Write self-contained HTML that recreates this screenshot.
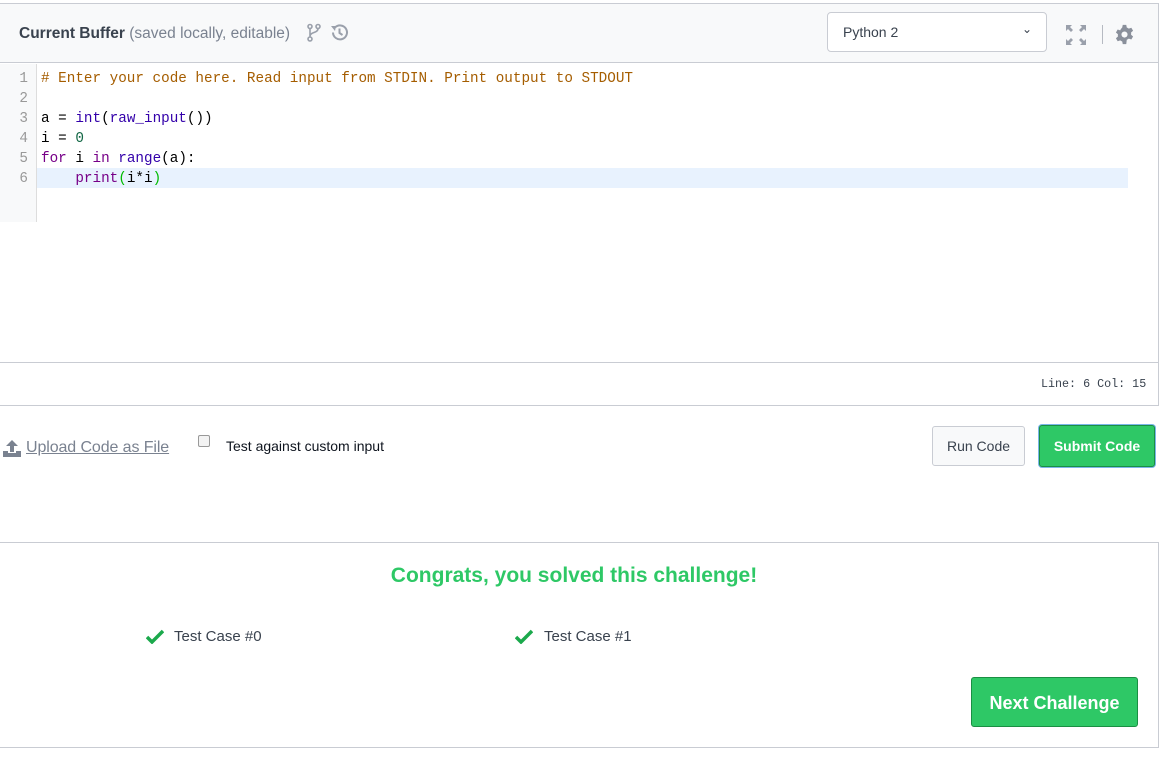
<!DOCTYPE html>
<html><head><style>
*{box-sizing:border-box;margin:0;padding:0}
body{width:1164px;height:760px;background:#fff;font-family:"Liberation Sans",sans-serif;position:relative;overflow:hidden}
.abs{position:absolute}
.box{left:0;top:3px;width:1159px;height:403px;border:1px solid #c9ccd3;border-left:none}
.hdr{left:0;top:4px;width:1158px;height:59px;background:#f8f9fa;border-bottom:1px solid #c9ccd3}
.code{font-family:"Liberation Mono",monospace;font-size:14.3px;line-height:20px;white-space:pre}
.gut{left:0;top:64px;width:37px;height:158px;background:#f8f9fa;border-right:1px solid #ddd}
.btn{border-radius:3px;font-size:14px;font-weight:bold;text-align:center}
</style></head><body>
<div class="abs box"></div>
<div class="abs hdr"></div>
<div class="abs" style="left:19px;top:25px;font-size:15.5px;color:#39424e"><b style="font-weight:bold">Current Buffer</b> <span style="color:#7a8290">(saved locally, editable)</span></div>
<svg class="abs" style="left:306px;top:23px" width="16" height="20" viewBox="0 0 16 20"><g fill="none" stroke="#9aa0ab" stroke-width="1.6"><circle cx="4" cy="3.5" r="2"/><circle cx="12" cy="3.5" r="2"/><circle cx="4" cy="16" r="2"/><path d="M4 5.5V14M12 5.5c0 5-8 3-8 8"/></g></svg>
<svg class="abs" style="left:330px;top:23px" width="19" height="19" viewBox="0 0 19 19"><g fill="none" stroke="#9aa0ab" stroke-width="2"><path d="M3 9.5a7 7 0 1 0 2-5"/><path d="M9.5 5.5v4.5l3 2"/></g><path d="M1 3l5 0-1 5z" fill="#9aa0ab"/></svg>
<div class="abs" style="left:827px;top:12px;width:220px;height:40px;background:#fff;border:1px solid #c9ccd3;border-radius:4px;font-size:14px;color:#39424e;padding:11px 0 0 15px">Python 2<span style="position:absolute;right:14px;top:9px;font-size:12px">&#8964;</span></div>
<svg class="abs" style="left:1065px;top:24px" width="22" height="22" viewBox="0 0 22 22" fill="#9aa0ab"><path d="M1 1h6l-2 2 3 3-2 2-3-3-2 2zM21 1h-6l2 2-3 3 2 2 3-3 2 2zM1 21h6l-2-2 3-3-2-2-3 3-2-2zM21 21h-6l2-2-3-3 2-2 3 3 2-2z"/></svg>
<div class="abs" style="left:1102px;top:25px;width:1px;height:19px;background:#b6bac2"></div>
<svg class="abs" style="left:1114px;top:24px" width="21" height="21" viewBox="0 0 24 24"><path fill="#8a909b" d="M10 1h4l.6 3a8 8 0 0 1 2.3 1.3l2.9-1 2 3.4-2.3 2a8 8 0 0 1 0 2.6l2.3 2-2 3.4-2.9-1a8 8 0 0 1-2.3 1.3L14 23h-4l-.6-3a8 8 0 0 1-2.3-1.3l-2.9 1-2-3.4 2.3-2a8 8 0 0 1 0-2.6l-2.3-2 2-3.4 2.9 1A8 8 0 0 1 9.4 4z"/><circle cx="12" cy="12" r="3.5" fill="#f8f9fa"/></svg>
<div class="abs gut"></div>
<div class="abs" style="left:37px;top:168px;width:1091px;height:20px;background:#e8f2fe"></div>
<div class="abs code" style="left:0;top:69px;width:28px;text-align:right;color:#999">1
2
3
4
5
6</div>
<div class="abs code" style="left:41px;top:69px;color:#000"><span style="color:#a55d00">&#35; Enter your code here. Read input from STDIN. Print output to STDOUT</span>

a = <span style="color:#3300aa">int</span>(<span style="color:#3300aa">raw_input</span>())
i = <span style="color:#116644">0</span>
<span style="color:#770088">for</span> i <span style="color:#770088">in</span> <span style="color:#3300aa">range</span>(a):
    <span style="color:#770088">print</span><span style="color:#0b0">(</span>i*i<span style="color:#0b0">)</span></div>
<div class="abs" style="left:0;top:362px;width:1158px;height:1px;background:#c9ccd3"></div>
<div class="abs" style="left:1041px;top:377px;font-family:'Liberation Mono',monospace;font-size:11.7px;color:#39424e">Line: 6 Col: 15</div>
<svg class="abs" style="left:3px;top:440px" width="18" height="17" viewBox="0 0 18 17" fill="#7a8290"><path d="M9 0l6 6h-4v6H7V6H3z"/><path d="M0 11h5v2h8v-2h5v6H0z"/></svg>
<div class="abs" style="left:26px;top:439px;font-size:16px;color:#7a8290;text-decoration:underline;letter-spacing:-0.1px">Upload Code as File</div>
<div class="abs" style="left:198px;top:435px;width:12px;height:12px;border:1px solid #999;border-radius:2px;background:#f3f3f3"></div>
<div class="abs" style="left:226px;top:438px;font-size:14px;color:#0e141e">Test against custom input</div>
<div class="abs btn" style="left:932px;top:426px;width:93px;height:40px;border:1px solid #c9ccd3;background:#f8f9fa;color:#39424e;font-weight:normal;padding-top:11px">Run Code</div>
<div class="abs btn" style="left:1039px;top:425px;width:116px;height:42px;border:1px solid #1a8f43;background:#2ec866;color:#fff;padding-top:12px;box-shadow:0 0 0 1px #7ab6e8">Submit Code</div>
<div class="abs" style="left:0;top:542px;width:1159px;height:206px;border:1px solid #c9ccd3;border-left:none"></div>
<div class="abs" style="left:0;top:564px;width:1148px;text-align:center;font-size:21px;font-weight:bold;color:#2ec866">Congrats, you solved this challenge!</div>
<svg class="abs" style="left:146px;top:629px" width="18" height="15" viewBox="0 0 18 15"><path d="M1 8l5 5L17 2" fill="none" stroke="#1ba94c" stroke-width="3.5"/></svg>
<div class="abs" style="left:174px;top:628px;font-size:15px;color:#39424e">Test Case #0</div>
<svg class="abs" style="left:515px;top:629px" width="18" height="15" viewBox="0 0 18 15"><path d="M1 8l5 5L17 2" fill="none" stroke="#1ba94c" stroke-width="3.5"/></svg>
<div class="abs" style="left:544px;top:628px;font-size:15px;color:#39424e">Test Case #1</div>
<div class="abs btn" style="left:971px;top:677px;width:167px;height:50px;border:1px solid #1a8f43;background:#2ec866;color:#fff;font-size:18px;padding-top:15px">Next Challenge</div>
</body></html>
